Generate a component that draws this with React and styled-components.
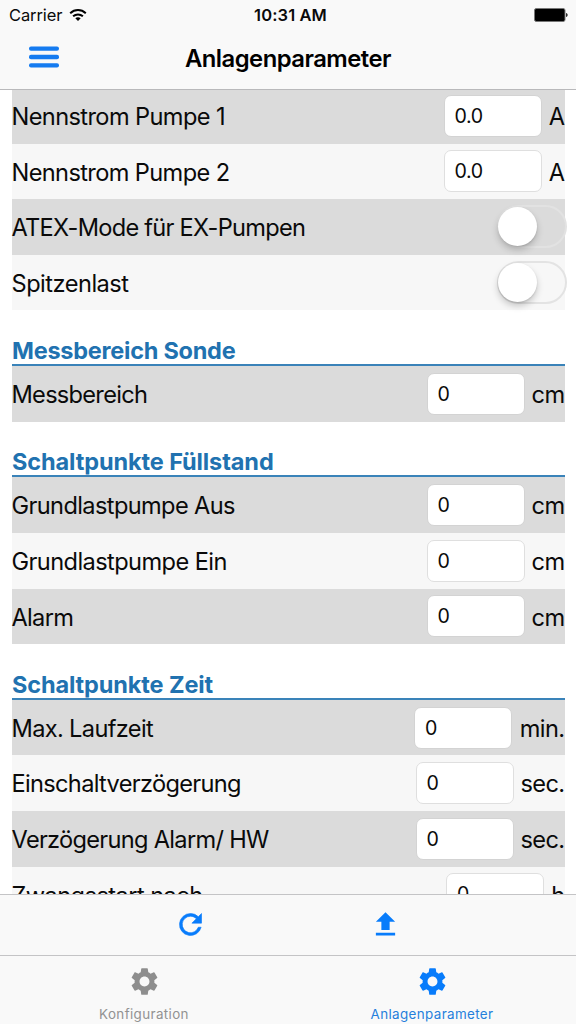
import React from "react";
import styled, { createGlobalStyle } from "styled-components";
import { MdSettings, MdFileUpload } from "react-icons/md";

const GlobalStyle = createGlobalStyle`
  * { box-sizing: border-box; }
  body { margin: 0; background: #fff; }
`;

const Screen = styled.div`
  width: 576px;
  height: 1024px;
  display: flex;
  flex-direction: column;
  overflow: hidden;
  background: #fff;
  color: #0a0a0a;
  font-family: Inter, "Liberation Sans", sans-serif;
`;

const Header = styled.header`
  flex: none;
  height: 90px;
  background: #f9f9f9;
  border-bottom: 1px solid #b9b9bb;
`;

const StatusBar = styled.div`
  height: 30px;
  display: grid;
  grid-template-columns: 1fr auto 1fr;
  align-items: center;
  padding: 0 8px 0 9px;
  font-size: 16.5px;
  line-height: 30px;
`;

const Carrier = styled.div`
  display: flex;
  align-items: center;
  gap: 7px;
  letter-spacing: -0.1px;
`;

const Clock = styled.div`
  padding-left: 4px;
  font-weight: 600;
  font-size: 16.5px;
  letter-spacing: 0.1px;
`;

const BatterySlot = styled.div`
  display: flex;
  justify-content: flex-end;
  padding-bottom: 1px;
`;

const NavBar = styled.div`
  height: 59px;
  display: grid;
  grid-template-columns: 86px 1fr 86px;
  align-items: center;
`;

const MenuButton = styled.div`
  display: flex;
  justify-content: center;
  padding: 0 0 5px 1px;
`;

const Title = styled.h1`
  margin: 0;
  padding-bottom: 2px;
  text-align: center;
  font-size: 23.8px;
  line-height: 56px;
  font-weight: 600;
  letter-spacing: -0.5px;
  color: #000;
`;

const Content = styled.main`
  flex: 1;
  min-height: 0;
  overflow: hidden;
  padding: 0 11.5px;
`;

const List = styled.div`
  margin-top: -2px;
`;

const Section = styled.section`
  margin-bottom: 23.8px;
`;

const SectionTitle = styled.h2`
  margin: 0;
  height: 31.9px;
  padding-left: 0.5px;
  border-bottom: 2px solid #3a83b9;
  font-size: 23.5px;
  line-height: 34px;
  font-weight: 700;
  letter-spacing: ${(p) => p.$track || 0}px;
  white-space: nowrap;
  color: #2172b0;
`;

const Row = styled.div`
  height: 55.6px;
  display: flex;
  align-items: center;
  justify-content: space-between;
  background: ${(p) => (p.$shaded ? "#dbdbdb" : "#f7f7f7")};
`;

const Label = styled.span`
  font-size: 23.6px;
  line-height: 30px;
  padding-top: 2.4px;
  letter-spacing: ${(p) => p.$track || 0}px;
  white-space: nowrap;
`;

const Field = styled.div`
  display: flex;
  align-items: center;
`;

const Input = styled.div`
  width: 98px;
  height: 42px;
  padding-left: 10px;
  border: 1px solid ${(p) => (p.$shaded ? "#d3d3d3" : "#dfdfdf")};
  border-radius: 7px;
  background: #fff;
  font-size: 19.6px;
  line-height: 40px;
  letter-spacing: -0.4px;
`;

const Unit = styled.span`
  width: ${(p) => p.$width}px;
  padding-top: 2.4px;
  font-size: 23.6px;
  line-height: 30px;
  text-align: right;
  letter-spacing: -0.6px;
  white-space: nowrap;
`;

const Switch = styled.div`
  width: 70px;
  height: 43px;
  margin: 0 -2.5px 0 0;
  border: 2px solid ${(p) => (p.$shaded ? "#e2e2e2" : "#e3e3e3")};
  border-radius: 22px;
`;

const Knob = styled.div`
  width: 39px;
  height: 39px;
  margin-left: -1px;
  border-radius: 50%;
  background: #fff;
  box-shadow: 0 4px 7px rgba(0, 0, 0, 0.2), 0 1px 2px rgba(0, 0, 0, 0.12);
`;

const Toolbar = styled.div`
  flex: none;
  height: 61px;
  display: grid;
  grid-template-columns: repeat(2, 195px);
  justify-content: center;
  align-items: center;
  padding-bottom: 2px;
  border-top: 1px solid #c4c4c6;
  background: #f9f9f9;
  color: #087cfb;
`;

const ToolButton = styled.div`
  display: flex;
  justify-content: center;
`;

const TabBar = styled.nav`
  flex: none;
  height: 69px;
  display: grid;
  grid-template-columns: 1fr 1fr;
  border-top: 1px solid #c4c4c6;
  background: #f9f9f9;
`;

const Tab = styled.div`
  display: flex;
  flex-direction: column;
  align-items: center;
  padding-top: 9px;
  color: ${(p) => (p.$active ? "#087cfb" : "#8e8e8e")};
`;

const TabLabel = styled.span`
  margin-top: 7px;
  font-size: 13.4px;
  line-height: 18px;
  letter-spacing: 0.38px;
  color: ${(p) => (p.$active ? "#257fdc" : "#929292")};
`;

const WifiIcon = () => (
  <svg width="18" height="14" viewBox="0 0 18 14" fill="none" stroke="#000" strokeWidth="2">
    <path d="M1.2 5.2C5.7 1 12.3 1 16.8 5.2" />
    <path d="M4.1 8.3C6.9 5.8 11.1 5.8 13.9 8.3" />
    <path d="M6.3 10.2C7.9 9 10.1 9 11.7 10.2L9 13Z" fill="#000" stroke="none" />
  </svg>
);

const BatteryIcon = () => (
  <svg width="34" height="14" viewBox="0 0 34 14">
    <rect x="0.5" y="0.5" width="30.5" height="13" rx="1.8" fill="#000" stroke="#777" />
    <path d="M32.2 5C34 5.5 34 8.5 32.2 9Z" fill="#000" />
  </svg>
);

const MenuIcon = () => (
  <svg width="30" height="22" viewBox="0 0 30 22" fill="#157bf0">
    <rect y="0.4" width="30" height="4.4" rx="2" />
    <rect y="8.8" width="30" height="4.4" rx="2" />
    <rect y="17.2" width="30" height="4.4" rx="2" />
  </svg>
);

const RefreshIcon = () => (
  <svg width="33" height="33" viewBox="0 0 24 24" fill="currentColor" stroke="currentColor" strokeWidth="0.45">
    <path d="M17.65 6.35A7.96 7.96 0 0 0 12 4a8 8 0 1 0 7.73 10h-2.08A6 6 0 1 1 12 6c1.66 0 3.14.69 4.22 1.78L13 11h7V4l-2.35 2.35z" />
  </svg>
);

const sections = [
  {
    rows: [
      { label: "Nennstrom Pumpe 1", value: "0.0", unit: "A", track: -0.6 },
      { label: "Nennstrom Pumpe 2", value: "0.0", unit: "A", track: -0.62 },
      { label: "ATEX-Mode für EX-Pumpen", track: -0.73 },
      { label: "Spitzenlast", track: -0.5 },
    ],
  },
  {
    title: "Messbereich Sonde",
    track: -0.25,
    rows: [{ label: "Messbereich", value: "0", unit: "cm", track: -0.72 }],
  },
  {
    title: "Schaltpunkte Füllstand",
    track: -0.1,
    rows: [
      { label: "Grundlastpumpe Aus", value: "0", unit: "cm", track: -0.62 },
      { label: "Grundlastpumpe Ein", value: "0", unit: "cm", track: -0.58 },
      { label: "Alarm", value: "0", unit: "cm", track: -0.7 },
    ],
  },
  {
    title: "Schaltpunkte Zeit",
    track: -0.12,
    rows: [
      { label: "Max. Laufzeit", value: "0", unit: "min.", track: -0.65 },
      { label: "Einschaltverzögerung", value: "0", unit: "sec.", track: -0.68 },
      { label: "Verzögerung Alarm/ HW", value: "0", unit: "sec.", track: -0.7 },
      { label: "Zwangsstart nach", value: "0", unit: "h", track: -0.56 },
    ],
  },
];

const unitWidths = { A: 23, cm: 40, "min.": 52.5, "sec.": 51, h: 20.5 };

export default function App() {
  return (
    <>
      <GlobalStyle />
      <Screen>
        <Header>
          <StatusBar>
            <Carrier>
              Carrier
              <WifiIcon />
            </Carrier>
            <Clock>10:31 AM</Clock>
            <BatterySlot>
              <BatteryIcon />
            </BatterySlot>
          </StatusBar>
          <NavBar>
            <MenuButton>
              <MenuIcon />
            </MenuButton>
            <Title>Anlagenparameter</Title>
          </NavBar>
        </Header>
        <Content>
          <List>
            {sections.map((section, s) => (
              <Section key={s}>
                {section.title && <SectionTitle $track={section.track}>{section.title}</SectionTitle>}
                {section.rows.map((row, i) => {
                  const shaded = i % 2 === 0;
                  return (
                    <Row key={row.label} $shaded={shaded}>
                      <Label $track={row.track}>{row.label}</Label>
                      {row.unit ? (
                        <Field>
                          <Input $shaded={shaded}>{row.value}</Input>
                          <Unit $width={unitWidths[row.unit]}>{row.unit}</Unit>
                        </Field>
                      ) : (
                        <Switch $shaded={shaded}>
                          <Knob />
                        </Switch>
                      )}
                    </Row>
                  );
                })}
              </Section>
            ))}
          </List>
        </Content>
        <Toolbar>
          <ToolButton>
            <RefreshIcon />
          </ToolButton>
          <ToolButton>
            <MdFileUpload size={33} />
          </ToolButton>
        </Toolbar>
        <TabBar>
          <Tab>
            <MdSettings size={33} />
            <TabLabel>Konfiguration</TabLabel>
          </Tab>
          <Tab $active>
            <MdSettings size={33} />
            <TabLabel $active>Anlagenparameter</TabLabel>
          </Tab>
        </TabBar>
      </Screen>
    </>
  );
}
